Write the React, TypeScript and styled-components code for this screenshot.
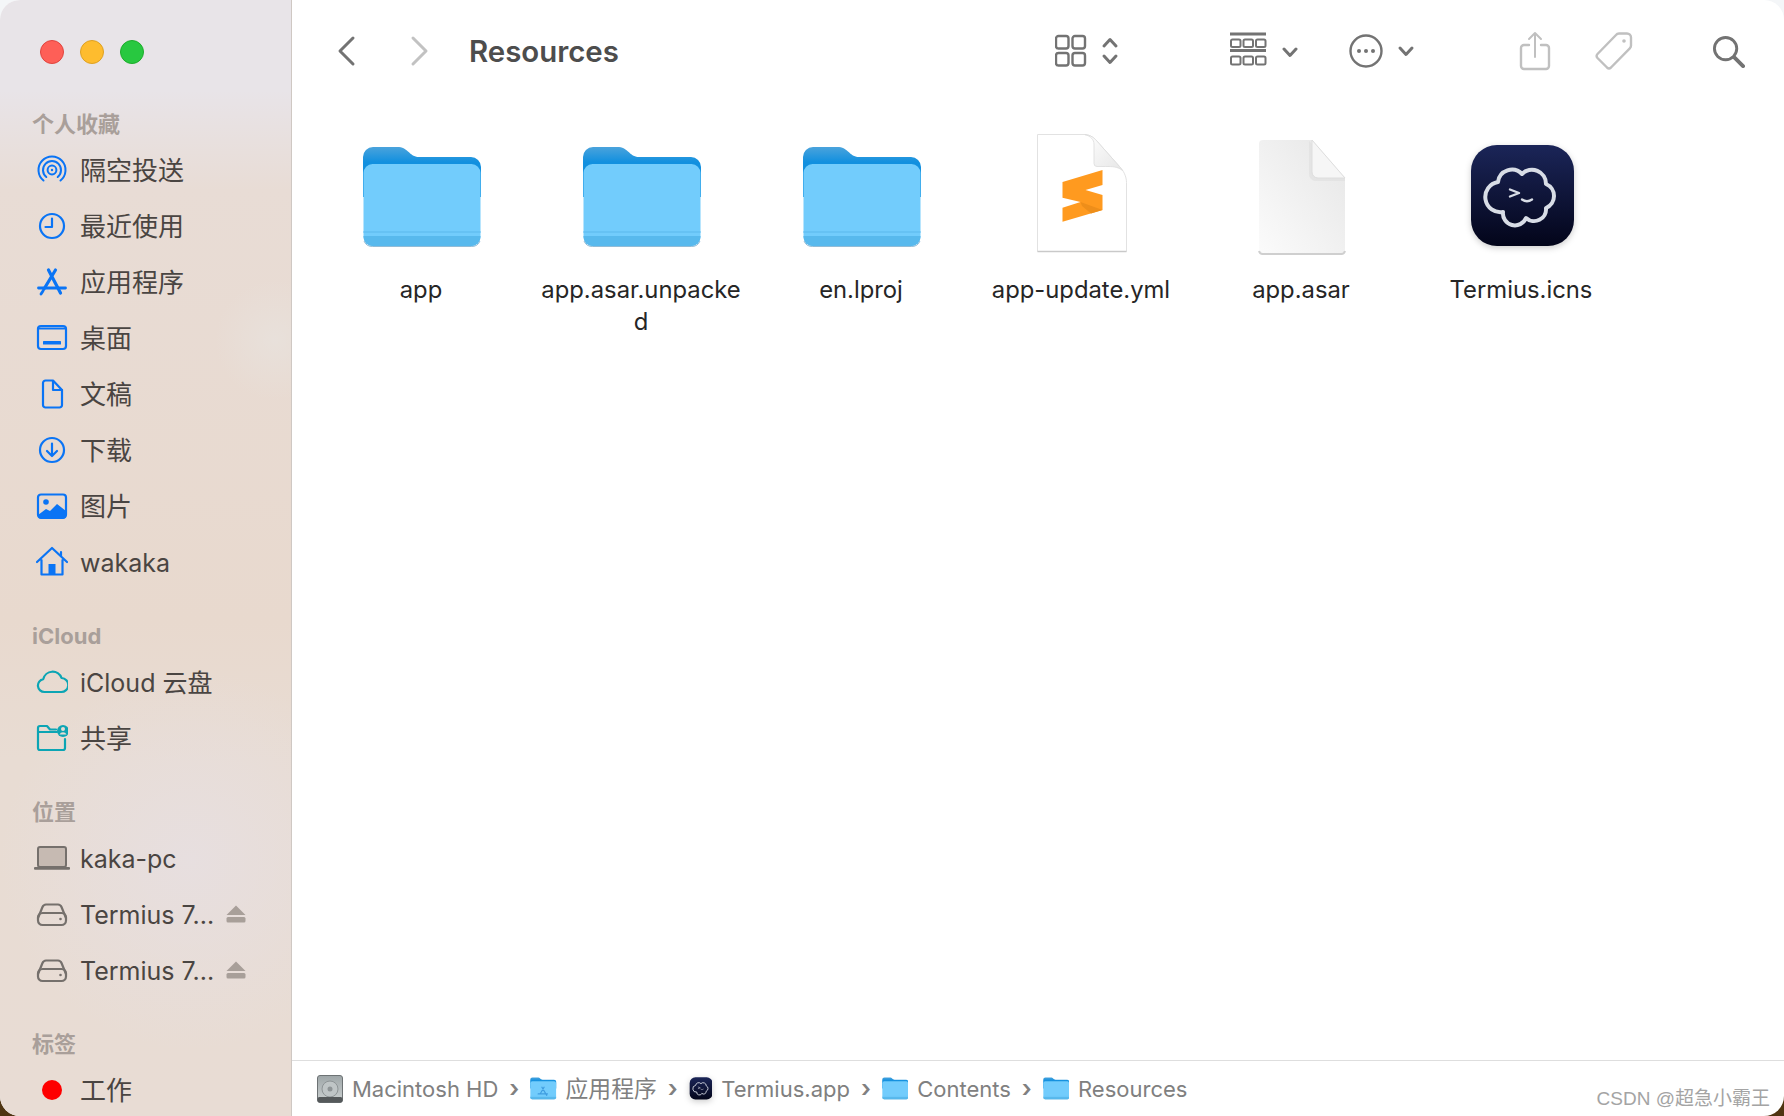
import styled, { createGlobalStyle } from 'styled-components'
import { ReactNode } from 'react'

const GlobalStyle = createGlobalStyle`
  html, body {
    margin: 0;
    height: 100%;
    overflow: hidden;
    background: linear-gradient(#f4f6f8 0 50%, #4f3512 50% 100%);
    font-family: 'Inter', 'Noto Sans CJK SC', sans-serif;
  }
  * { box-sizing: border-box; }
`

const blue = '#0a74f5'
const teal = '#0ca5b4'
const gray = '#75706c'

const Stroke = ({ size = 32, color = blue, width = 2.2, children }: { size?: number; color?: string; width?: number; children: ReactNode }) => (
  <svg width={size} height={size} viewBox='0 0 32 32' fill='none' stroke={color} strokeWidth={width} strokeLinecap='round' strokeLinejoin='round'>
    {children}
  </svg>
)

const AirDropIcon = () => (
  <Stroke width={2}>
    <path d='M7.5 26.500A13.500 13.500 0 1 1 24.500 26.500' />
    <path d='M10.300 23A9 9 0 1 1 21.700 23' />
    <circle cx='16' cy='16' r='4.400' />
    <circle cx='16' cy='16' r='1.200' fill={blue} stroke='none' />
  </Stroke>
)
const ClockIcon = () => (
  <Stroke>
    <circle cx='16' cy='16' r='12' />
    <path d='M16 8.500V17H9.500' />
  </Stroke>
)
const AppsIcon = () => (
  <Stroke>
    <path d='M12.500 4l12 23M19.500 4L8 23' strokeWidth={3.2} />
    <path d='M2.500 22h27M5 28l2-3' strokeWidth={2.8} />
  </Stroke>
)
const DesktopIcon = () => (
  <Stroke>
    <rect x='2' y='4' width='28' height='23' rx='3' />
    <path d='M2 6.500h28' />
    <rect x='7' y='19' width='18' height='3.600' rx='.6' fill={blue} stroke='none' />
  </Stroke>
)
const DocIcon = () => (
  <Stroke>
    <path d='M7 5a2.500 2.500 0 0 1 2.500-2.500H17L26 12v15a2.500 2.500 0 0 1-2.500 2.500h-14A2.500 2.500 0 0 1 7 27z' />
    <path d='M17 3v9h9' />
  </Stroke>
)
const DownloadIcon = () => (
  <Stroke>
    <circle cx='16' cy='16' r='12' />
    <path d='M16 9.500v12M11 17l5 5 5-5' />
  </Stroke>
)
const PictureIcon = () => (
  <Stroke>
    <rect x='2' y='4.500' width='28' height='23' rx='3' />
    <circle cx='10' cy='12' r='2.800' fill={blue} stroke='none' />
    <path d='M2 25l8-6 4 2 7-7 9 7v5a3 3 0 0 1-3 3H5a3 3 0 0 1-3-3z' fill={blue} stroke='none' />
  </Stroke>
)
const HomeIcon = () => (
  <Stroke>
    <path d='M1 16L16 2l15 14M25 6v4M5.500 14v14.500h21V14' />
    <rect x='12.500' y='18' width='7' height='10.500' fill={blue} stroke='none' />
  </Stroke>
)
const CloudIcon = () => (
  <Stroke color={teal}>
    <path d='M8.500 26a6.500 6.500 0 0 1-1.200-12.900A9.500 9.500 0 0 1 25.500 12a7 7 0 0 1-.5 14z' />
  </Stroke>
)
const SharedIcon = () => (
  <Stroke color={teal}>
    <path d='M21 10H2V26a2 2 0 0 0 2 2h23a2 2 0 0 0 2-2V17M2 10V6a2 2 0 0 1 2-2h7l3 3.500h6' />
    <circle cx='27' cy='9' r='6' fill={teal} stroke='none' />
    <circle cx='27' cy='7' r='2' fill='#e8dcd3' stroke='none' />
    <path d='M23.500 12.500a3.800 3.800 0 0 1 7 0z' fill='#e8dcd3' stroke='none' />
  </Stroke>
)
const LaptopIcon = () => (
  <svg width='38' height='32' viewBox='0 0 38 32'>
    <rect x='5' y='5' width='28' height='20' rx='2' fill='#c6bab2' stroke={gray} strokeWidth='2' />
    <rect x='1' y='25' width='36' height='2.800' rx='1' fill={gray} />
  </svg>
)
const DiskIcon = () => (
  <Stroke color={gray}>
    <path d='M2 20l4.500-11A4 4 0 0 1 10 6.500h12A4 4 0 0 1 25.500 9L30 20' />
    <rect x='2' y='15' width='28' height='12' rx='4.500' />
    <circle cx='24.500' cy='21' r='1.300' fill={gray} stroke='none' />
  </Stroke>
)

const EjectIcon = () => (
  <svg width='20' height='20' viewBox='0 0 20 20' fill='#a89f99'>
    <path d='M10 1.500L19.500 11h-19z' />
    <rect x='.5' y='13' width='19' height='5.500' rx='1.500' />
  </svg>
)

const FolderIcon = ({ size = 118 }: { size?: number }) => (
  <svg width={(size * 119) / 118} height={(size * 102) / 118} viewBox='-1 -2 119 102'>
    <defs>
      <linearGradient id='fb' x1='0' y1='0' x2='0' y2='1'>
        <stop offset='0' stopColor='#4aa3dc' />
        <stop offset='.3' stopColor='#1290df' />
      </linearGradient>
    </defs>
    <path d='M0 10a10 10 0 0 1 10-10h24c6 0 8 2 11 4.500 3.500 3 6 5.500 11 5.500h52a10 10 0 0 1 10 10v30H0z' fill='url(#fb)' />
    <rect x='.5' y='17' width='117' height='82' rx='9' fill='#72ccfc' />
    <path d='M.5 89h117v1a9 9 0 0 1-9 9H9.500a9 9 0 0 1-9-9z' fill='#58b9ed' />
    <path d='M.5 84h117v2H.5z' fill='#66c2f4' />
    <path d='M1 94a9 9 0 0 0 8.500 5.500h99a9 9 0 0 0 8.500-5.500' fill='none' stroke='#4a8fbd' strokeWidth='1' opacity='.6' />
  </svg>
)

const SublimeFile = () => (
  <svg width='93' height='124' viewBox='0 1 93 124'>
    <defs>
      <linearGradient id='sf' x1='0' y1='0' x2='1' y2='1'>
        <stop offset='0' stopColor='#ffffff' />
        <stop offset='1' stopColor='#e6e6e6' />
      </linearGradient>
    </defs>
    <path d='M2.500 1.500h47c4 0 8 2 11 5l24 27c4 4 7 10 7 16v69h-89z' fill='#fff' stroke='#e2e2e2' strokeWidth='1' />
    <path d='M2.500 118.500h89' stroke='#c9c9c9' strokeWidth='1.500' />
    <path d='M49.500 1.500c4 0 8 2 11 5l24 27c1 1 2 3 3 4-5-4-10-4-17-4H62a3 3 0 0 1-3-3V11c0-4-3-8-9.500-9.500z' fill='url(#sf)' stroke='#dcdcdc' strokeWidth='.8' />
    <path d='M27.500 49L67.500 37V52L50.500 57L67.500 62V77L27.500 88.700V74.700L45.500 69L27.500 64.700z' fill='#ff9a1f' />
    <path d='M45.500 69L67.500 77L56 80.500L47 73z' fill='#ee8e1a' />
  </svg>
)

const BlankFile = () => (
  <svg width='89' height='118' viewBox='-1 -2 89 118'>
    <defs>
      <linearGradient id='bf' x1='1' y1='0' x2='0' y2='1'>
        <stop offset='0' stopColor='#e6e6e6' />
        <stop offset='1' stopColor='#fbfbfb' />
      </linearGradient>
    </defs>
    <path d='M1 5a4 4 0 0 1 4-4h49l33 38v71a4 4 0 0 1-4 4H5a4 4 0 0 1-4-4z' fill='url(#bf)' />
    <path d='M1 112a4 4 0 0 0 4 3h78a4 4 0 0 0 4-3' fill='none' stroke='#cfcfcf' strokeWidth='2' />
    <path d='M51 2v33a7 7 0 0 0 7 7h29v-3z' fill='#dcdcdc' opacity='.5' />
    <path d='M54 1l33 38H60a6 6 0 0 1-6-6z' fill='#f6f6f6' stroke='#dedede' strokeWidth='1' />
  </svg>
)

const TermiusIcon = ({ size = 104 }: { size?: number }) => (
  <TermiusSvg width={(size * 106) / 104} height={size} viewBox='0 0 106 104'>
    <defs>
      <linearGradient id='tm' x1='0' y1='0' x2='0' y2='1'>
        <stop offset='0' stopColor='#1b2558' />
        <stop offset='1' stopColor='#03051a' />
      </linearGradient>
    </defs>
    <rect x='3' y='1' width='103' height='101' rx='26' fill='url(#tm)' />
    <g transform='translate(2 0)' fill='none' stroke='#d8dde6' strokeLinejoin='round'>
      <path d='M52 30A14 14 0 0 1 76 40A13 13 0 0 1 76 64A12 12 0 0 1 56 74A12 12 0 0 1 33 68A14 14 0 0 1 28 38A14 14 0 0 1 52 30z' strokeWidth='4' />
      <path d='M40 45.500L49 49L40 52.500M52 55.500c3 2 7 2 10 0' strokeWidth='2.400' strokeLinecap='round' />
    </g>
  </TermiusSvg>
)

const DiskBadge = () => (
  <svg width='26' height='28' viewBox='0 0 26 28'>
    <defs>
      <linearGradient id='hd' x1='0' y1='0' x2='0' y2='1'>
        <stop offset='0' stopColor='#9ea6a8' />
        <stop offset='1' stopColor='#cdd2d2' />
      </linearGradient>
    </defs>
    <rect x='.5' y='.5' width='25' height='27' rx='2.500' fill='url(#hd)' stroke='#6d7274' />
    <circle cx='13' cy='14' r='8' fill='#bfc5c6' stroke='#8e9496' />
    <circle cx='13' cy='14' r='2.500' fill='#8e9496' />
    <rect x='.5' y='22' width='25' height='5.500' rx='2' fill='#55595b' />
  </svg>
)

const AppsFolderIcon = () => (
  <BadgeWrap>
    <FolderIcon size={26} />
    <Overlay>
      <svg width='12' height='12' viewBox='0 0 32 32' fill='none' stroke='#3f9de0' strokeWidth='3' strokeLinecap='round'>
        <path d='M13 3l13 22M19 3L9 20M3 21h25' />
      </svg>
    </Overlay>
  </BadgeWrap>
)

function TagDot() {
  return <Dot />
}

interface SideItem {
  label: string
  icon: ReactNode
  eject?: boolean
}

const sections: { title: string; items: SideItem[] }[] = [
  {
    title: '个人收藏',
    items: [
      { label: '隔空投送', icon: <AirDropIcon /> },
      { label: '最近使用', icon: <ClockIcon /> },
      { label: '应用程序', icon: <AppsIcon /> },
      { label: '桌面', icon: <DesktopIcon /> },
      { label: '文稿', icon: <DocIcon /> },
      { label: '下载', icon: <DownloadIcon /> },
      { label: '图片', icon: <PictureIcon /> },
      { label: 'wakaka', icon: <HomeIcon /> },
    ],
  },
  {
    title: 'iCloud',
    items: [
      { label: 'iCloud 云盘', icon: <CloudIcon /> },
      { label: '共享', icon: <SharedIcon /> },
    ],
  },
  {
    title: '位置',
    items: [
      { label: 'kaka-pc', icon: <LaptopIcon /> },
      { label: 'Termius 7...', icon: <DiskIcon />, eject: true },
      { label: 'Termius 7...', icon: <DiskIcon />, eject: true },
    ],
  },
  {
    title: '标签',
    items: [{ label: '工作', icon: <TagDot /> }],
  },
]

const files: { name: string; icon: ReactNode }[] = [
  { name: 'app', icon: <FolderIcon /> },
  { name: 'app.asar.unpacked', icon: <FolderIcon /> },
  { name: 'en.lproj', icon: <FolderIcon /> },
  { name: 'app-update.yml', icon: <SublimeFile /> },
  { name: 'app.asar', icon: <BlankFile /> },
  { name: 'Termius.icns', icon: <TermiusIcon /> },
]

const crumbs: { name: string; icon: ReactNode }[] = [
  { name: 'Macintosh HD', icon: <DiskBadge /> },
  { name: '应用程序', icon: <AppsFolderIcon /> },
  { name: 'Termius.app', icon: <TermiusIcon size={23} /> },
  { name: 'Contents', icon: <FolderIcon size={26} /> },
  { name: 'Resources', icon: <FolderIcon size={26} /> },
]

const cjkOnly = (text: string) => /^[\u4e00-\u9fff]+$/.test(text)
const hasCjk = (text: string) => /[\u4e00-\u9fff]/.test(text)

export default function App() {
  return (
    <>
      <GlobalStyle />
      <Window>
        <Sidebar>
          <Lights>
            <Light $color='#fe5f57' $edge='#e0443e' />
            <Light $color='#febc2e' $edge='#dea123' />
            <Light $color='#28c840' $edge='#1dad2b' />
          </Lights>
          {sections.map((section) => (
            <Section key={section.title}>
              <SectionTitle>{section.title}</SectionTitle>
              {section.items.map((item, i) => (
                <SideRow key={i}>
                  <SideIcon>{item.icon}</SideIcon>
                  <SideLabel $big={cjkOnly(item.label)} $cjk={hasCjk(item.label)}>{item.label}</SideLabel>
                  {item.eject && <EjectIcon />}
                </SideRow>
              ))}
            </Section>
          ))}
        </Sidebar>
        <Main>
          <Toolbar>
            <ToolButton>
              <svg width='24' height='32' viewBox='0 0 24 32' fill='none' stroke='#737373' strokeWidth='3' strokeLinecap='round' strokeLinejoin='round'>
                <path d='M18 3L5 16l13 13' />
              </svg>
            </ToolButton>
            <ToolButton $gap={48}>
              <svg width='24' height='32' viewBox='0 0 24 32' fill='none' stroke='#c2c2c2' strokeWidth='3' strokeLinecap='round' strokeLinejoin='round'>
                <path d='M6 3l13 13L6 29' />
              </svg>
            </ToolButton>
            <Title>Resources</Title>
            <ToolButton $gap={436}>
              <svg width='66' height='34' viewBox='0 0 66 34' fill='none' stroke='#737373' strokeWidth='2.400'>
                <rect x='1' y='2' width='12.500' height='12.500' rx='2.500' />
                <rect x='17.500' y='2' width='12.500' height='12.500' rx='2.500' />
                <rect x='1' y='19' width='12.500' height='12.500' rx='2.500' />
                <rect x='17.500' y='19' width='12.500' height='12.500' rx='2.500' />
                <path d='M61 12l-6-6.500L49 12M49 22l6 6.500 6-6.500' strokeWidth='3' strokeLinecap='round' strokeLinejoin='round' />
              </svg>
            </ToolButton>
            <ToolButton $gap={109}>
              <svg width='68' height='38' viewBox='0 0 68 38' fill='none' stroke='#737373' strokeWidth='2'>
                <path d='M0 2h36M0 18.500h36' strokeWidth='3' />
                <rect x='1' y='7.500' width='9.500' height='7.500' rx='1.500' />
                <rect x='13.500' y='7.500' width='9.500' height='7.500' rx='1.500' />
                <rect x='26' y='7.500' width='9.500' height='7.500' rx='1.500' />
                <rect x='1' y='24.500' width='9.500' height='8' rx='1.500' />
                <rect x='13.500' y='24.500' width='9.500' height='8' rx='1.500' />
                <rect x='26' y='24.500' width='9.500' height='8' rx='1.500' />
                <path d='M54 17l6 6.500 6-6.500' strokeWidth='3' strokeLinecap='round' strokeLinejoin='round' />
              </svg>
            </ToolButton>
            <ToolButton $gap={51}>
              <svg width='68' height='36' viewBox='0 0 68 36' fill='none' stroke='#737373' strokeWidth='2.400'>
                <circle cx='17' cy='18' r='15.500' />
                <circle cx='10' cy='18' r='2' fill='#737373' stroke='none' />
                <circle cx='17' cy='18' r='2' fill='#737373' stroke='none' />
                <circle cx='24' cy='18' r='2' fill='#737373' stroke='none' />
                <path d='M51 15l6 6.500 6-6.500' strokeWidth='3' strokeLinecap='round' strokeLinejoin='round' />
              </svg>
            </ToolButton>
            <ToolButton $gap={102}>
              <svg width='32' height='40' viewBox='0 0 32 40' fill='none' stroke='#c0c0c0' strokeWidth='2.400' strokeLinecap='round' strokeLinejoin='round'>
                <path d='M10 14H5a3 3 0 0 0-3 3v18a3 3 0 0 0 3 3h22a3 3 0 0 0 3-3V17a3 3 0 0 0-3-3h-5' />
                <path d='M16 26V2M10 8l6-6 6 6' strokeWidth='2' />
              </svg>
            </ToolButton>
            <ToolButton $gap={44}>
              <svg width='38' height='38' viewBox='0 0 38 38' fill='none' stroke='#c0c0c0' strokeWidth='2.400' strokeLinejoin='round'>
                <path d='M24 1.500h8a4 4 0 0 1 4 4v8a4 4 0 0 1-1.200 2.800L16 35.500a3 3 0 0 1-4 0L2.500 26a3 3 0 0 1 0-4L21 3a4 4 0 0 1 3-1.500z' />
                <circle cx='29' cy='9' r='1.800' fill='#c0c0c0' stroke='none' />
              </svg>
            </ToolButton>
            <ToolButton $gap={79}>
              <svg width='33' height='33' viewBox='0 0 34 34' fill='none' stroke='#737373' strokeWidth='3' strokeLinecap='round'>
                <circle cx='14' cy='14' r='11.500' />
                <path d='M23 23l9 9' strokeWidth='4' />
              </svg>
            </ToolButton>
          </Toolbar>
          <FileGrid>
            {files.map((file) => (
              <FileCell key={file.name}>
                <FileIcon>{file.icon}</FileIcon>
                <FileName>{file.name}</FileName>
              </FileCell>
            ))}
          </FileGrid>
          <PathBar>
            {crumbs.map((crumb, i) => (
              <Crumb key={crumb.name}>
                {crumb.icon}
                <CrumbName $cjk={hasCjk(crumb.name)}>{crumb.name}</CrumbName>
                {i < crumbs.length - 1 && <Chevron>›</Chevron>}
              </Crumb>
            ))}
          </PathBar>
          <Watermark>CSDN @超急小霸王</Watermark>
        </Main>
      </Window>
    </>
  )
}

const Window = styled.div`
  display: flex;
  width: 1784px;
  height: 1116px;
  border-radius: 20px;
  overflow: hidden;
  background: #fff;
`

const Sidebar = styled.aside`
  flex: 0 0 292px;
  height: 100%;
  border-right: 1px solid #cfc8c3;
  background:
    radial-gradient(circle at 275px 340px, rgba(232, 228, 224, 0.6), rgba(232, 228, 224, 0) 60px),
    radial-gradient(circle at 190px 860px, rgba(231, 223, 224, 0.95), rgba(231, 223, 224, 0) 190px),
    linear-gradient(180deg, #e8e4e8 0, #e8e4e8 90px, #e8dcd5 190px, #e8d9ce 620px, #e8dcd3 760px, #e8dcd4 1116px);
`

const Lights = styled.div`
  display: flex;
  align-items: center;
  gap: 16px;
  height: 103px;
  margin-bottom: 2px;
  padding-left: 40px;
`

const Light = styled.span<{ $color: string; $edge: string }>`
  width: 24px;
  height: 24px;
  border-radius: 50%;
  background: ${({ $color }) => $color};
  border: 1px solid ${({ $edge }) => $edge};
`

const Section = styled.section`
  margin-bottom: 27px;
`

const SectionTitle = styled.h3`
  margin: 0;
  height: 37px;
  padding-left: 32px;
  font-size: 22px;
  line-height: 38px;
  font-weight: 700;
  color: #a99f9a;
`

const SideRow = styled.div`
  display: flex;
  align-items: center;
  height: 56px;
  padding-left: 32px;
`

const SideIcon = styled.span`
  display: flex;
  justify-content: center;
  align-items: center;
  width: 40px;
  margin-right: 8px;
`

const SideLabel = styled.span<{ $big: boolean; $cjk: boolean }>`
  font-size: ${({ $big }) => ($big ? 26 : 25)}px;
  padding: ${({ $cjk }) => ($cjk ? '0 0 3px' : '2px 0 0')};
  color: #4a4542;
  white-space: nowrap;
  margin-right: 12px;
`

const Dot = styled.span`
  width: 20px;
  height: 20px;
  border-radius: 50%;
  background: #fe0000;
`

const Main = styled.main`
  position: relative;
  flex: 1;
  display: flex;
  flex-direction: column;
  min-width: 0;
`

const Toolbar = styled.header`
  flex: 0 0 102px;
  display: flex;
  align-items: center;
  padding-left: 43px;
`

const ToolButton = styled.span<{ $gap?: number }>`
  display: flex;
  margin-left: ${({ $gap }) => $gap ?? 0}px;
`

const Title = styled.h1`
  flex: 0 0 150px;
  margin: 0 0 0 38px;
  font-size: 29.4px;
  font-weight: 600;
  color: #4d4d4d;
`

const FileGrid = styled.div`
  flex: 1;
  display: grid;
  grid-template-columns: repeat(6, 220px);
  align-content: start;
  padding: 28px 0 0 19px;
`

const FileCell = styled.div`
  display: flex;
  flex-direction: column;
  align-items: center;
`

const FileIcon = styled.div`
  display: flex;
  align-items: center;
  justify-content: center;
  height: 132px;
`

const TermiusSvg = styled.svg`
  filter: drop-shadow(0 2px 3px rgba(0, 0, 0, 0.2));
`

const FileName = styled.div`
  width: 204px;
  margin-top: 12px;
  text-align: center;
  word-break: break-all;
  font-size: 23.8px;
  line-height: 32px;
  color: #262626;
`

const PathBar = styled.footer`
  flex: 0 0 56px;
  display: flex;
  align-items: center;
  gap: 11px;
  padding-left: 25px;
  border-top: 1px solid #dedede;
  font-size: 22px;
  color: #808080;
`

const Crumb = styled.div`
  display: flex;
  align-items: center;
  gap: 9px;
`

const CrumbName = styled.span<{ $cjk: boolean }>`
  font-size: ${({ $cjk }) => ($cjk ? 22.8 : 22)}px;
  padding-bottom: ${({ $cjk }) => ($cjk ? 3 : 0)}px;
`

const Chevron = styled.span`
  margin-left: 2px;
  font-size: 24px;
  font-weight: 600;
  line-height: 1;
`

const BadgeWrap = styled.div`
  position: relative;
  line-height: 0;
`

const Overlay = styled.span`
  position: absolute;
  inset: 6px 0 0 0;
  display: flex;
  align-items: center;
  justify-content: center;
`

const Watermark = styled.div`
  position: absolute;
  right: 14px;
  bottom: 6px;
  font-family: 'Liberation Sans', 'Noto Sans CJK SC', sans-serif;
  font-size: 19px;
  color: #a4a4a4;
`
